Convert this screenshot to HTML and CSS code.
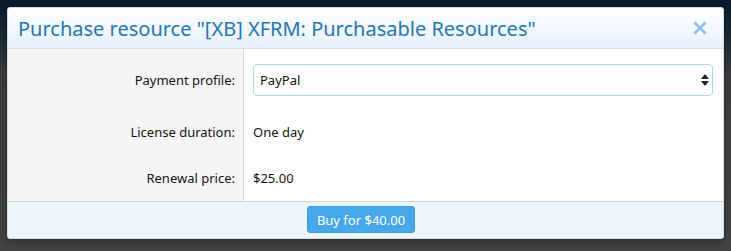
FILE: index.html
```html
<!DOCTYPE html>
<html>
<head>
  <title>Purchase resource</title>
  <link rel="stylesheet" href="styles.css">
</head>
<body>
  <div class="overlay">
    <div class="overlay-title">
      <h2>Purchase resource "[XB] XFRM: Purchasable Resources"</h2>
      <a class="overlay-close" title="Close">
        <svg width="14" height="14" viewBox="0 0 14 14">
          <path d="M1.5 1.5 L12.5 12.5 M12.5 1.5 L1.5 12.5" stroke="#8dc1e8" stroke-width="2.6" fill="none"/>
        </svg>
      </a>
    </div>

    <div class="form-body">
      <div class="form-row">
        <div class="row-label">Payment profile:</div>
        <div class="row-value">
          <div class="select-wrap">
            <select class="input">
              <option>PayPal</option>
            </select>
            <svg class="select-arrows" width="8" height="12" viewBox="0 0 8 12">
              <path d="M4 0 L8 5 L0 5 Z M0 7 L8 7 L4 12 Z" fill="#222"/>
            </svg>
          </div>
        </div>
      </div>

      <div class="form-row">
        <div class="row-label">License duration:</div>
        <div class="row-value">One day</div>
      </div>

      <div class="form-row">
        <div class="row-label">Renewal price:</div>
        <div class="row-value">$25.00</div>
      </div>
    </div>

    <div class="form-submit">
      <button>Buy for $40.00</button>
    </div>
  </div>
</body>
</html>
```

FILE: styles.css
```css
body {
  margin: 0;
  padding: 7px;
  height: 251px;
  box-sizing: border-box;
  font-family: "Noto Sans", "Open Sans", sans-serif;
  font-size: 13px;
  color: #141414;
  background: linear-gradient(to bottom, #061a2c 0px, #1c2a36 40px, #3b3d3f 75px, #424242 100%);
  overflow: hidden;
}
.overlay {
  width: 717px;
  background-color: white;
  border: 1px solid #d8d8d8;
  border-radius: 3px;
  box-sizing: border-box;
  box-shadow: 0 2px 6px rgba(0,0,0,0.35);
}
.overlay-title {
  display: flex;
  align-items: center;
  justify-content: space-between;
  height: 41px;
  padding: 0 16px 0 10px;
  box-sizing: border-box;
  background: linear-gradient(to bottom, #fefeff, #e6f1fb);
  border-bottom: 1px solid #d6e0e8;
  border-radius: 3px 3px 0 0;
}
.overlay-title h2 {
  margin: 0;
  font-weight: normal;
  font-size: 20px;
  color: #2577b1;
}
.overlay-close {
  display: flex;
  cursor: pointer;
}
.form-body {
  background: linear-gradient(to right, #f5f5f5 235px, #dcdcdc 235px, #dcdcdc 236px, white 236px);
  padding: 15px 0 13px;
  display: flex;
  flex-direction: column;
  gap: 26px;
}
.form-row {
  display: grid;
  grid-template-columns: 236px 1fr;
  align-items: center;
}
.row-label {
  text-align: right;
  padding-right: 9px;
  line-height: 20px;
}
.row-value {
  padding: 0 10px 0 9px;
  line-height: 20px;
}
.select-wrap {
  position: relative;
}
.input {
  width: 100%;
  height: 32px;
  padding: 0 6px;
  font-family: inherit;
  font-size: 13px;
  color: #141414;
  background: white;
  border: 1px solid #a9d4f2;
  border-radius: 4px;
  appearance: none;
  -webkit-appearance: none;
  box-sizing: border-box;
}
.select-arrows {
  position: absolute;
  right: 4px;
  top: 10px;
  pointer-events: none;
}
.form-submit {
  display: flex;
  justify-content: center;
  padding: 4px 9px 5px 0;
  background-color: #ebf5fc;
  border-top: 1px solid #cfd3d6;
  border-radius: 0 0 3px 3px;
}
.form-submit button {
  font-family: inherit;
  font-size: 13px;
  color: white;
  background-color: #47a7eb;
  border: 1px solid #3f9ee0;
  border-radius: 3px;
  height: 27px;
  width: 108px;
  padding: 0;
  cursor: pointer;
}
```
